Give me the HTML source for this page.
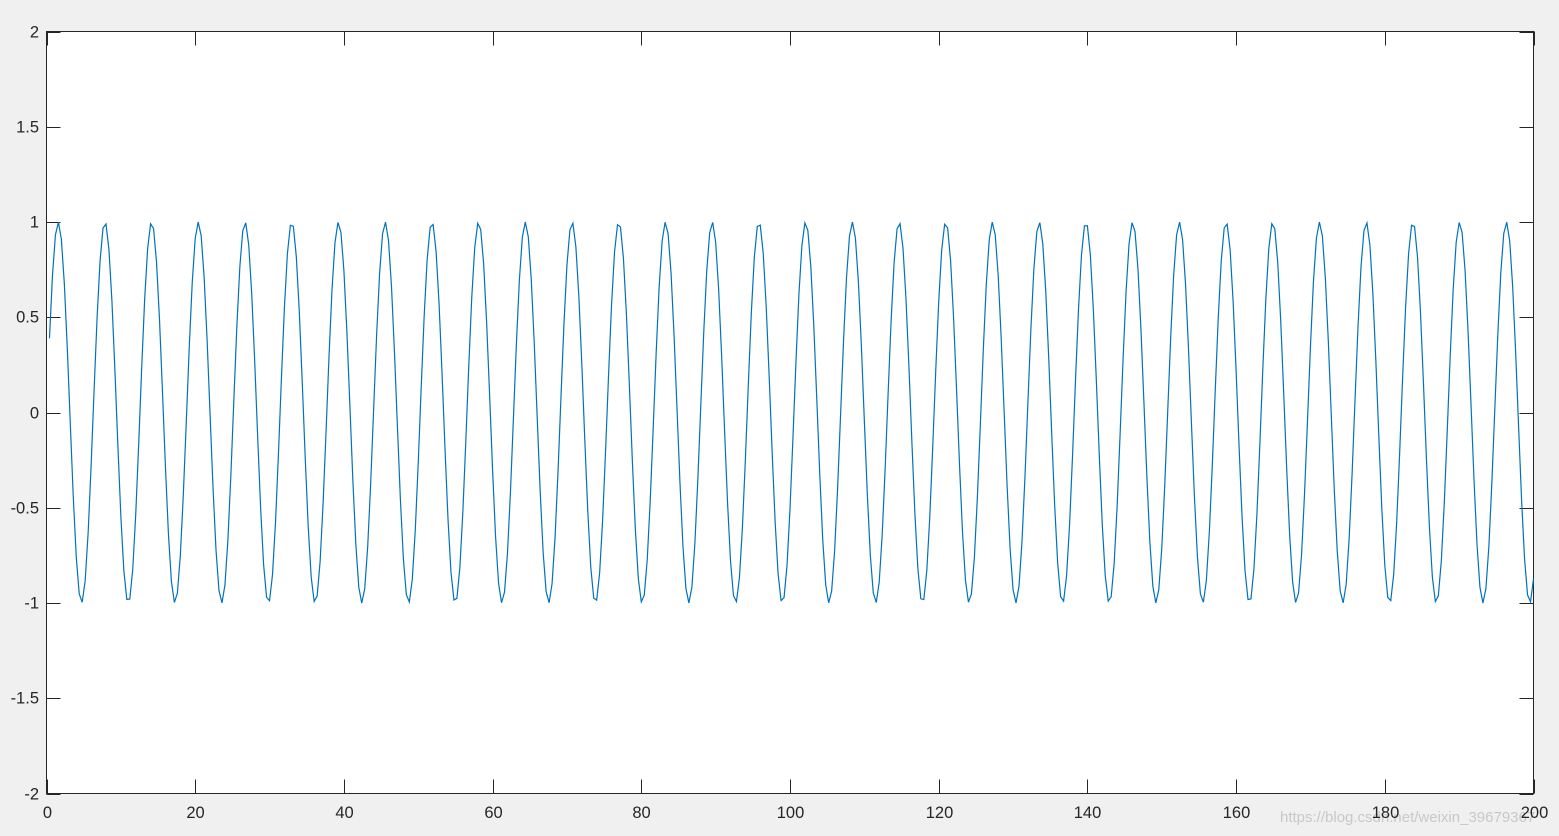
<!DOCTYPE html>
<html><head><meta charset="utf-8"><style>
html,body{margin:0;padding:0;background:#f0f0f0;width:1559px;height:836px;overflow:hidden}
svg{display:block}
text{font-family:"Liberation Sans",Arial,sans-serif;font-size:16.5px;fill:#262626}
</style></head><body>
<svg id="s" width="1559" height="836" xmlns="http://www.w3.org/2000/svg">
<rect x="46.5" y="31.5" width="1487" height="762" fill="#fff" stroke="#262626" stroke-width="1"/>
<g id="ticks" stroke="#262626" stroke-width="1"></g>
<g id="labels"></g>
<polyline id="p" fill="none" stroke="#0072bd" stroke-width="1.2"/>
<text x="1280" y="822" style="fill:#c8c8c8;font-size:15px">https://blog.csdn.net/weixin_39679367</text>
<g id="xl"></g>
</svg>
<script>
var L=46.5,R=1533.5,T=31.5,B=793.5;
function X(v){return L+(R-L)*v/200}
function Y(v){return T+(B-T)*(2-v)/4}
var t=document.getElementById('ticks'),lb=document.getElementById('labels'),xl=document.getElementById('xl'),ns='http://www.w3.org/2000/svg';
function line(x1,y1,x2,y2){var e=document.createElementNS(ns,'line');e.setAttribute('x1',x1);e.setAttribute('y1',y1);e.setAttribute('x2',x2);e.setAttribute('y2',y2);t.appendChild(e)}
function txt(g,x,y,s,a){var e=document.createElementNS(ns,'text');e.setAttribute('x',x);e.setAttribute('y',y);e.setAttribute('text-anchor',a);e.textContent=s;g.appendChild(e)}
for(var i=0;i<=10;i++){var x=Math.round(X(i*20))+0.5;line(x,B,x,B-14);line(x,T,x,T+14);txt(xl,x,818,String(i*20),'middle')}
var yv=[2,1.5,1,0.5,0,-0.5,-1,-1.5,-2];
yv.forEach(function(v){var y=Math.round(Y(v))+0.5;line(L,y,L+14,y);line(R,y,R-14,y);txt(lb,39,y+5,String(v),'end')});
var pts=[];for(var k=1;k<=500;k++){var tt=0.4*k;pts.push(X(tt).toFixed(2)+','+Y(Math.sin(tt)).toFixed(2))}
document.getElementById('p').setAttribute('points',pts.join(' '));
</script>
</body></html>
